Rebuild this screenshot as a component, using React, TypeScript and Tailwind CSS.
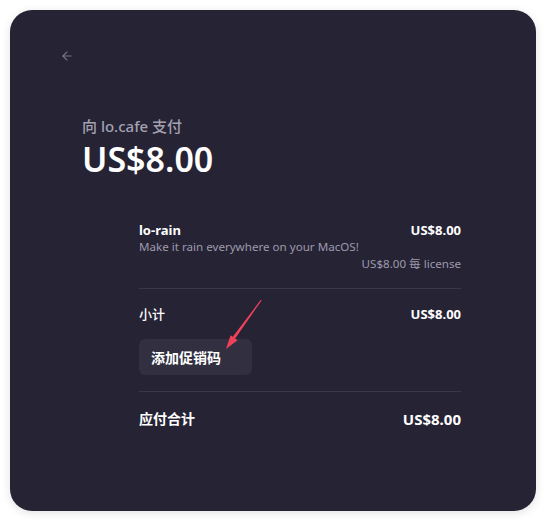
import React from "react";

const font = { fontFamily: '"Noto Sans", "Noto Sans CJK SC", sans-serif' };

export default function App() {
  return (
    <div className="relative w-[546px] h-[521px] bg-white" style={font}>
      <div className="absolute left-[10px] top-[10px] w-[526px] h-[501px] rounded-[22px] bg-[#262335] shadow-[0_2px_10px_rgba(0,0,0,0.12)] overflow-hidden">
        <div className="pl-[50px] pt-[39px]">
          <svg width="14" height="14" viewBox="0 0 24 24" fill="none" stroke="#77748a" strokeWidth="2" strokeLinecap="round" strokeLinejoin="round">
            <path d="M19 12H5" />
            <path d="M12 19l-7-7 7-7" />
          </svg>
        </div>
        <div className="ml-[72px] mt-[53px]">
          <div className="text-[15px] leading-[20px] text-[#a3a1b2] font-medium">向 lo.cafe 支付</div>
          <div className="mt-[4px] text-[34px] leading-[38px] font-semibold text-white">US$8.00</div>
        </div>
        <div className="ml-[129px] w-[322px] mt-[44px]">
          <div className="flex justify-between items-start">
            <div>
              <div className="text-[13px] leading-[17px] font-bold text-white">lo-rain</div>
              <div className="text-[11.6px] leading-[16px] text-[#9d9aac]">Make it rain everywhere on your MacOS!</div>
            </div>
            <div className="text-[13px] leading-[17px] font-bold text-white">US$8.00</div>
          </div>
          <div className="text-right text-[11.6px] leading-[16px] text-[#9d9aac] mt-[1px]">US$8.00 每 license</div>
          <div className="h-px bg-[#3a3749] mt-[16px]" />
          <div className="flex justify-between items-center mt-[16px]">
            <div className="text-[13px] leading-[18px] font-medium text-white">小计</div>
            <div className="text-[13px] leading-[18px] font-bold text-white">US$8.00</div>
          </div>
          <div className="mt-[16px] w-[113px] h-[36px] rounded-[6px] bg-[#322f41] flex items-center pl-[12px] text-[14px] font-semibold text-white">添加促销码</div>
          <div className="h-px bg-[#3a3749] mt-[16px]" />
          <div className="flex justify-between items-center mt-[17px]">
            <div className="text-[14px] leading-[20px] font-semibold text-white">应付合计</div>
            <div className="text-[15px] leading-[20px] font-bold text-white">US$8.00</div>
          </div>
        </div>
      </div>
      <svg className="absolute left-0 top-0 pointer-events-none" width="546" height="521">
        <polygon points="261.6,300.4 260.8,299.8 232.6,337.0 235.0,338.8" fill="#f0415b" />
        <polygon points="226,349 237.6,340.2 230.6,335.2" fill="#f0415b" />
      </svg>
    </div>
  );
}
